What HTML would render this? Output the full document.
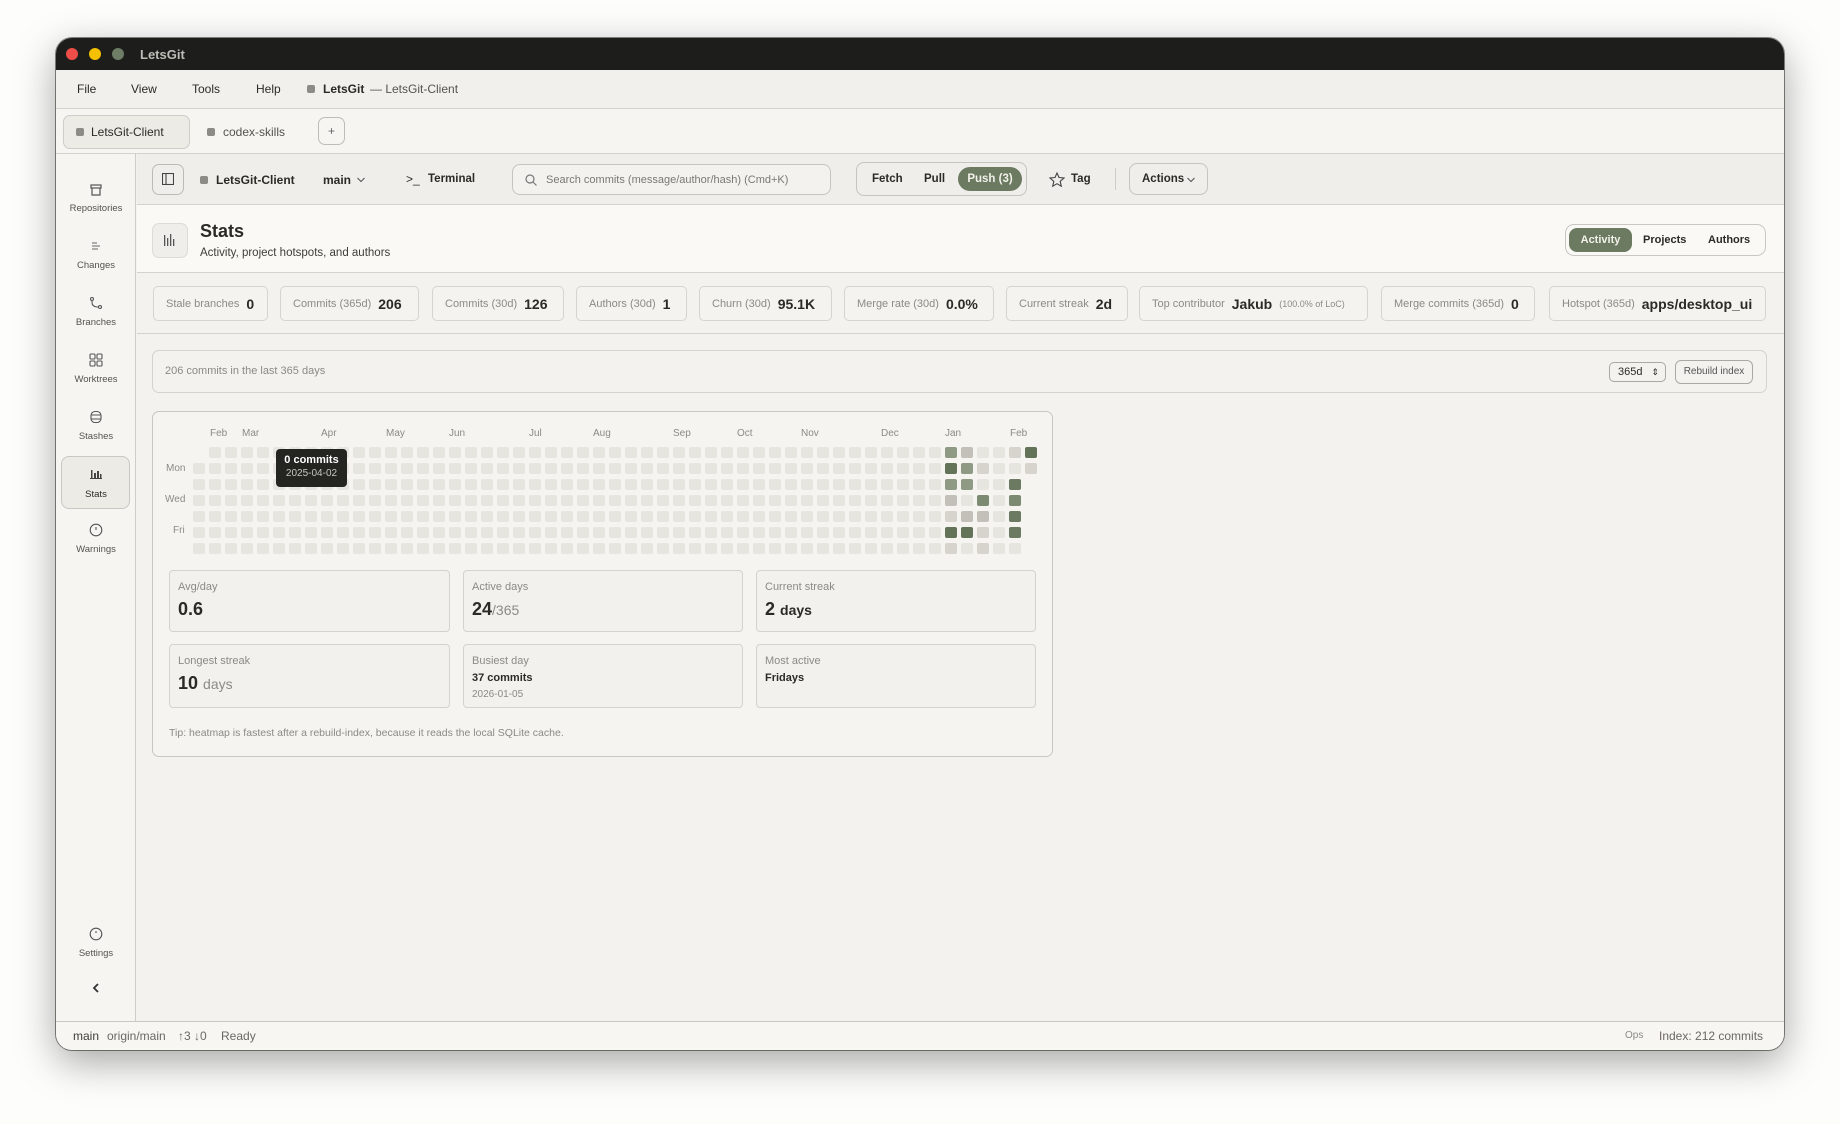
<!DOCTYPE html>
<html><head><meta charset="utf-8"><style>
*{box-sizing:border-box;margin:0;padding:0}
body{width:1840px;height:1124px;background:#fdfdfc;font-family:"Liberation Sans",sans-serif;color:#2a2a26;position:relative;overflow:hidden}
.a{position:absolute}
.win{position:absolute;left:56px;top:38px;width:1728px;height:1012px;border-radius:16px;overflow:hidden;background:#f3f2ee;box-shadow:0 12px 40px rgba(0,0,0,.35),0 0 0 1px #8a8a86}
.t{position:absolute;white-space:nowrap}
.card{position:absolute;top:286px;height:35px;border:1px solid #d6d4ce;border-radius:5px;background:#f4f3ef;font-size:11px;color:#8c8a84;display:flex;align-items:center;padding:0 12px;gap:7px;white-space:nowrap;overflow:hidden}
.card b{font-size:14px;color:#2a2a26}
.sb{position:absolute;left:0;width:80px;text-align:center;font-size:9.5px;color:#55534e}
.bc{position:absolute;border:1px solid #d4d2cc;border-radius:4px;background:#f2f1ed}
.bc .l{position:absolute;left:8px;top:10px;font-size:11px;color:#8c8a84}
.bc .v{position:absolute;left:8px;top:28px;font-size:18px;font-weight:bold;color:#2a2a26}
.v span{font-size:14px;font-weight:normal;color:#8c8a84}
.ml{position:absolute;top:428px;font-size:10px;color:#8c8a84}
</style></head><body>
<div class="win">
 <div class="a" style="left:0;top:0;width:1728px;height:32px;background:#1d1d1b"></div>
 <div class="a" style="left:10px;top:10px;width:12px;height:12px;border-radius:50%;background:#ee4d48"></div>
 <div class="a" style="left:33px;top:10px;width:12px;height:12px;border-radius:50%;background:#f5c000"></div>
 <div class="a" style="left:56px;top:10px;width:12px;height:12px;border-radius:50%;background:#6e7d65"></div>
 <div class="t" style="left:84px;top:9px;font-size:13px;color:#bdbdb8;font-weight:bold">LetsGit</div>
 <div class="a" style="left:0;top:32px;width:1728px;height:39px;background:#f1f0ec;border-bottom:1px solid #d4d2cc"></div>
 <div class="t" style="left:21px;top:44px;font-size:12px">File</div>
 <div class="t" style="left:75px;top:44px;font-size:12px">View</div>
 <div class="t" style="left:136px;top:44px;font-size:12px">Tools</div>
 <div class="t" style="left:200px;top:44px;font-size:12px">Help</div>
 <div class="a" style="left:251px;top:47px;width:8px;height:8px;border-radius:2px;background:#8d8b85"></div>
 <div class="t" style="left:267px;top:44px;font-size:12px;font-weight:bold">LetsGit</div>
 <div class="t" style="left:314px;top:44px;font-size:12px;color:#55534e">— LetsGit-Client</div>
 <div class="a" style="left:0;top:71px;width:1728px;height:45px;background:#f6f5f2;border-bottom:1px solid #d4d2cc"></div>
 <div class="a" style="left:7px;top:77px;width:127px;height:34px;border:1px solid #cfcdc7;border-radius:7px;background:#ecebe6"></div>
 <div class="a" style="left:20px;top:90px;width:8px;height:8px;border-radius:2px;background:#8d8b85"></div>
 <div class="t" style="left:35px;top:87px;font-size:12px">LetsGit-Client</div>
 <div class="a" style="left:151px;top:90px;width:8px;height:8px;border-radius:2px;background:#8d8b85"></div>
 <div class="t" style="left:167px;top:87px;font-size:12px;color:#55534e">codex-skills</div>
 <div class="a" style="left:262px;top:79px;width:27px;height:28px;border:1px solid #bebcb6;border-radius:7px;text-align:center;line-height:26px;font-size:12px;color:#666">+</div>
 <div class="a" style="left:0;top:116px;width:80px;height:867px;background:#f6f5f2;border-right:1px solid #cfcdc7"></div>
 <svg class="a" style="left:33px;top:145px" width="14" height="14" viewBox="0 0 14 14" fill="none" stroke="#555" stroke-width="1.2"><rect x="2" y="2" width="10" height="3"/><path d="M3 5v7h8V5"/></svg>
 <div class="sb" style="top:165px">Repositories</div>
 <svg class="a" style="left:34px;top:202px" width="12" height="12" fill="none" stroke="#666" stroke-width="1.1"><path d="M2 3h5M2 6h8M2 9h6"/></svg>
 <div class="sb" style="top:222px">Changes</div>
 <svg class="a" style="left:33px;top:258px" width="14" height="14" fill="none" stroke="#555" stroke-width="1.1"><circle cx="3" cy="3" r="1.5"/><circle cx="11" cy="11" r="1.5"/><path d="M3 4.5v2q0 4 5 4.5h1.5"/></svg>
 <div class="sb" style="top:279px">Branches</div>
 <svg class="a" style="left:33px;top:315px" width="14" height="14" fill="none" stroke="#555" stroke-width="1.1"><rect x="1" y="1" width="5" height="5" rx="1"/><rect x="8" y="1" width="5" height="5" rx="1"/><rect x="1" y="8" width="5" height="5" rx="1"/><rect x="8" y="8" width="5" height="5" rx="1"/></svg>
 <div class="sb" style="top:336px">Worktrees</div>
 <svg class="a" style="left:33px;top:372px" width="14" height="14" fill="none" stroke="#555" stroke-width="1.1"><rect x="2" y="1.5" width="10" height="11" rx="4"/><path d="M2 5h10M2 9h10"/></svg>
 <div class="sb" style="top:393px">Stashes</div>
 <div class="a" style="left:5px;top:418px;width:69px;height:53px;border:1px solid #c9c7c1;border-radius:8px;background:#ecebe6"></div>
 <svg class="a" style="left:33px;top:430px" width="14" height="12" fill="#444"><rect x="2" y="2" width="1.5" height="8"/><rect x="5" y="5" width="2" height="5"/><rect x="8" y="3" width="2" height="7"/><rect x="11" y="6" width="1.5" height="4"/><rect x="1" y="10" width="12" height="1"/></svg>
 <div class="sb" style="top:451px;color:#2a2a26">Stats</div>
 <svg class="a" style="left:33px;top:485px" width="14" height="14" fill="none" stroke="#555" stroke-width="1.1"><circle cx="7" cy="7" r="5.8"/><path d="M7 4v3"/></svg>
 <div class="sb" style="top:506px">Warnings</div>
 <svg class="a" style="left:33px;top:889px" width="14" height="14" fill="none" stroke="#555" stroke-width="1.1"><circle cx="7" cy="7" r="5.8"/><path d="M7 4v2"/></svg>
 <div class="sb" style="top:910px">Settings</div>
 <svg class="a" style="left:35px;top:944px" width="10" height="12" fill="none" stroke="#333" stroke-width="1.8"><path d="M7 2L3 6l4 4"/></svg>
 <div class="a" style="left:81px;top:116px;width:1647px;height:51px;background:#efeeea;border-bottom:1px solid #d4d2cc"></div>
 <div class="a" style="left:96px;top:126px;width:32px;height:31px;border:1px solid #bdbbb5;border-radius:7px"></div>
 <svg class="a" style="left:106px;top:135px" width="12" height="12" fill="none" stroke="#444" stroke-width="1.1"><rect x="0.5" y="0.5" width="11" height="11"/><path d="M4 1v10"/></svg>
 <div class="a" style="left:144px;top:138px;width:8px;height:8px;border-radius:2px;background:#8d8b85"></div>
 <div class="t" style="left:160px;top:135px;font-size:12px;font-weight:bold">LetsGit-Client</div>
 <div class="t" style="left:267px;top:135px;font-size:12px;font-weight:bold">main</div>
 <svg class="a" style="left:300px;top:138px" width="10" height="8" fill="none" stroke="#555" stroke-width="1.1"><path d="M1.5 2l3.5 3.5L8.5 2"/></svg>
 <div class="t" style="left:350px;top:134px;font-size:12px">&gt;_</div>
 <div class="t" style="left:372px;top:135px;font-size:11.5px;font-weight:bold">Terminal</div>
 <div class="a" style="left:456px;top:126px;width:319px;height:31px;border:1px solid #c6c4be;border-radius:8px;background:#f3f2ee"></div>
 <svg class="a" style="left:469px;top:136px" width="12" height="12" fill="none" stroke="#777" stroke-width="1.2"><circle cx="5" cy="5" r="4"/><path d="M8 8l3.5 3.5"/></svg>
 <div class="t" style="left:490px;top:136px;font-size:11px;color:#7a7873">Search commits (message/author/hash) (Cmd+K)</div>
 <div class="a" style="left:800px;top:124px;width:171px;height:34px;border:1px solid #c6c4be;border-radius:8px"></div>
 <div class="t" style="left:816px;top:135px;font-size:11.5px;font-weight:bold">Fetch</div>
 <div class="t" style="left:868px;top:135px;font-size:11.5px;font-weight:bold">Pull</div>
 <div class="a" style="left:902px;top:129px;width:64px;height:24px;border-radius:12px;background:#6b7a60;color:#f2f1ea;font-size:11.5px;font-weight:bold;text-align:center;line-height:24px">Push (3)</div>
 <svg class="a" style="left:993px;top:134px" width="16" height="15" fill="none" stroke="#444" stroke-width="1.1"><path d="M8 1l2 4.5 5 .5-3.8 3.3 1.1 4.9L8 11.7 3.7 14.2l1.1-4.9L1 6l5-.5z"/></svg>
 <div class="t" style="left:1015px;top:135px;font-size:11.5px;font-weight:bold">Tag</div>
 <div class="a" style="left:1059px;top:130px;width:1px;height:22px;background:#cfcdc7"></div>
 <div class="a" style="left:1073px;top:125px;width:79px;height:32px;border:1px solid #c6c4be;border-radius:8px;font-size:11.5px;font-weight:bold;line-height:30px;padding-left:12px">Actions</div>
 <svg class="a" style="left:1130px;top:138px" width="10" height="8" fill="none" stroke="#555" stroke-width="1.1"><path d="M1.5 2l3.5 3.5L8.5 2"/></svg>
 <div class="a" style="left:81px;top:167px;width:1647px;height:68px;background:#faf9f6;border-bottom:1px solid #d4d2cc"></div>
 <div class="a" style="left:96px;top:185px;width:36px;height:35px;border:1px solid #dddbd5;border-radius:7px;background:#efeeea"></div>
 <svg class="a" style="left:106px;top:194px" width="16" height="16" fill="#555"><rect x="2" y="3" width="1.3" height="11"/><rect x="5" y="6" width="1.3" height="8"/><rect x="8" y="2" width="1.3" height="12"/><rect x="11" y="7" width="1.3" height="7"/></svg>
 <div class="t" style="left:144px;top:183px;font-size:18px;font-weight:bold">Stats</div>
 <div class="t" style="left:144px;top:209px;font-size:11.5px;color:#3f3d38">Activity, project hotspots, and authors</div>
 <div class="a" style="left:1509px;top:186px;width:201px;height:32px;border:1px solid #c9c7c1;border-radius:9px;background:#faf9f6"></div>
 <div class="a" style="left:1513px;top:190px;width:63px;height:24px;border-radius:8px;background:#6b7a60;color:#f2f1ea;font-size:11px;font-weight:bold;text-align:center;line-height:24px">Activity</div>
 <div class="t" style="left:1587px;top:196px;font-size:11px;font-weight:bold">Projects</div>
 <div class="t" style="left:1652px;top:196px;font-size:11px;font-weight:bold">Authors</div>
 <div class="card" style="left:97px;width:115px;top:248px">Stale branches <b>0</b></div>
 <div class="card" style="left:224px;width:139px;top:248px">Commits (365d) <b>206</b></div>
 <div class="card" style="left:376px;width:132px;top:248px">Commits (30d) <b>126</b></div>
 <div class="card" style="left:520px;width:111px;top:248px">Authors (30d) <b>1</b></div>
 <div class="card" style="left:643px;width:133px;top:248px">Churn (30d) <b>95.1K</b></div>
 <div class="card" style="left:788px;width:150px;top:248px">Merge rate (30d) <b>0.0%</b></div>
 <div class="card" style="left:950px;width:122px;top:248px">Current streak <b>2d</b></div>
 <div class="card" style="left:1083px;width:229px;top:248px">Top contributor <b>Jakub</b> <span style="font-size:9px">(100.0% of LoC)</span></div>
 <div class="card" style="left:1325px;width:154px;top:248px">Merge commits (365d) <b>0</b></div>
 <div class="card" style="left:1493px;width:217px;top:248px">Hotspot (365d) <b>apps/desktop_ui</b></div>
 <div class="a" style="left:81px;top:295px;width:1647px;height:1px;background:#d4d2cc"></div>
 <div class="a" style="left:96px;top:312px;width:1615px;height:43px;border:1px solid #d4d2cc;border-radius:7px"></div>
 <div class="t" style="left:109px;top:327px;font-size:11px;color:#8c8a84">206 commits in the last 365 days</div>
 <div class="a" style="left:1553px;top:324px;width:57px;height:20px;border:1px solid #aaa8a2;border-radius:5px;font-size:11px;line-height:18px;padding-left:8px">365d <span style="position:absolute;right:6px;top:0;font-size:9px">⇕</span></div>
 <div class="a" style="left:1619px;top:322px;width:78px;height:24px;border:1px solid #aaa8a2;border-radius:6px;font-size:10px;line-height:22px;text-align:center;color:#555">Rebuild index</div>
 <div class="a" style="left:96px;top:373px;width:901px;height:346px;border:1px solid #c9c7c1;border-radius:7px;background:#f5f4f0"></div>
</div>
<div class="ml" style="left:210px">Feb</div><div class="ml" style="left:242px">Mar</div><div class="ml" style="left:321px">Apr</div><div class="ml" style="left:386px">May</div><div class="ml" style="left:449px">Jun</div><div class="ml" style="left:529px">Jul</div><div class="ml" style="left:593px">Aug</div><div class="ml" style="left:673px">Sep</div><div class="ml" style="left:737px">Oct</div><div class="ml" style="left:801px">Nov</div><div class="ml" style="left:881px">Dec</div><div class="ml" style="left:945px">Jan</div><div class="ml" style="left:1010px">Feb</div>
<div class="t" style="left:166px;top:463px;font-size:10px;color:#8c8a84">Mon</div>
<div class="t" style="left:165px;top:494px;font-size:10px;color:#8c8a84">Wed</div>
<div class="t" style="left:173px;top:525px;font-size:10px;color:#8c8a84">Fri</div>
<svg class="a" style="left:193px;top:447px" width="850" height="115">
 <defs><pattern id="p" width="16" height="16" patternUnits="userSpaceOnUse"><rect x="0" y="0" width="12" height="11" rx="2" fill="#e7e5e0"/></pattern></defs>
 <rect x="0" y="0" width="752" height="112" fill="url(#p)"/>
 <rect x="0" y="0" width="14" height="13" fill="#f5f4f0"/>
 <g fill="#e7e5e0"><rect x="768" y="48" width="12" height="11" rx="2"/><rect x="768" y="96" width="12" height="11" rx="2"/><rect x="784" y="0" width="12" height="11" rx="2"/><rect x="784" y="32" width="12" height="11" rx="2"/><rect x="800" y="0" width="12" height="11" rx="2"/><rect x="800" y="16" width="12" height="11" rx="2"/><rect x="800" y="32" width="12" height="11" rx="2"/><rect x="800" y="48" width="12" height="11" rx="2"/><rect x="800" y="64" width="12" height="11" rx="2"/><rect x="800" y="80" width="12" height="11" rx="2"/><rect x="800" y="96" width="12" height="11" rx="2"/><rect x="816" y="16" width="12" height="11" rx="2"/><rect x="816" y="96" width="12" height="11" rx="2"/></g>
 <g>
 <rect x="752" y="0" width="12" height="11" rx="2" fill="#8f9a85"/><rect x="752" y="16" width="12" height="11" rx="2" fill="#637358"/><rect x="752" y="32" width="12" height="11" rx="2" fill="#8f9a85"/><rect x="752" y="48" width="12" height="11" rx="2" fill="#c2c0b8"/><rect x="752" y="64" width="12" height="11" rx="2" fill="#d6d4cd"/><rect x="752" y="80" width="12" height="11" rx="2" fill="#637358"/><rect x="752" y="96" width="12" height="11" rx="2" fill="#d6d4cd"/>
 <rect x="768" y="0" width="12" height="11" rx="2" fill="#c2c0b8"/><rect x="768" y="16" width="12" height="11" rx="2" fill="#8f9a85"/><rect x="768" y="32" width="12" height="11" rx="2" fill="#8f9a85"/><rect x="768" y="64" width="12" height="11" rx="2" fill="#c2c0b8"/><rect x="768" y="80" width="12" height="11" rx="2" fill="#637358"/>
 <rect x="784" y="16" width="12" height="11" rx="2" fill="#d6d4cd"/><rect x="784" y="48" width="12" height="11" rx="2" fill="#7d8a72"/><rect x="784" y="64" width="12" height="11" rx="2" fill="#c2c0b8"/><rect x="784" y="80" width="12" height="11" rx="2" fill="#d6d4cd"/><rect x="784" y="96" width="12" height="11" rx="2" fill="#d6d4cd"/>
 <rect x="816" y="0" width="12" height="11" rx="2" fill="#d6d4cd"/><rect x="816" y="32" width="12" height="11" rx="2" fill="#6b7a60"/><rect x="816" y="48" width="12" height="11" rx="2" fill="#7d8a72"/><rect x="816" y="64" width="12" height="11" rx="2" fill="#6b7a60"/><rect x="816" y="80" width="12" height="11" rx="2" fill="#6b7a60"/>
 <rect x="832" y="0" width="12" height="11" rx="2" fill="#637358"/><rect x="832" y="16" width="12" height="11" rx="2" fill="#d6d4cd"/>
 </g>
</svg>
<div class="a" style="left:276px;top:449px;width:71px;height:38px;border-radius:4px;background:#242420;text-align:center">
 <div style="font-size:11px;font-weight:bold;color:#fff;margin-top:5px">0 commits</div>
 <div style="font-size:10px;color:#c8c6c0;margin-top:2px">2025-04-02</div>
</div>
<div class="bc" style="left:169px;top:570px;width:281px;height:62px"><div class="l">Avg/day</div><div class="v">0.6</div></div>
<div class="bc" style="left:463px;top:570px;width:280px;height:62px"><div class="l">Active days</div><div class="v">24<span>/365</span></div></div>
<div class="bc" style="left:756px;top:570px;width:280px;height:62px"><div class="l">Current streak</div><div class="v">2 <span style="color:#2a2a26;font-weight:bold">days</span></div></div>
<div class="bc" style="left:169px;top:644px;width:281px;height:64px"><div class="l">Longest streak</div><div class="v">10 <span>days</span></div></div>
<div class="bc" style="left:463px;top:644px;width:280px;height:64px"><div class="l">Busiest day</div><div style="position:absolute;left:8px;top:27px;font-size:11px;font-weight:bold">37 commits</div><div style="position:absolute;left:8px;top:44px;font-size:10px;color:#8c8a84">2026-01-05</div></div>
<div class="bc" style="left:756px;top:644px;width:280px;height:64px"><div class="l">Most active</div><div style="position:absolute;left:8px;top:27px;font-size:11px;font-weight:bold">Fridays</div></div>
<div class="t" style="left:169px;top:727px;font-size:10.5px;color:#8c8a84">Tip: heatmap is fastest after a rebuild-index, because it reads the local SQLite cache.</div>
<div class="a" style="left:56px;top:1021px;width:1728px;height:1px;background:#c9c7c1"></div>
<div class="a" style="left:56px;top:1022px;width:1728px;height:28px;background:#f7f6f3;border-radius:0 0 16px 16px"></div>
<div class="t" style="left:73px;top:1029px;font-size:12px;color:#3f3d38">main</div>
<div class="t" style="left:107px;top:1029px;font-size:12px;color:#6a6863">origin/main</div>
<div class="t" style="left:178px;top:1029px;font-size:12px;color:#6a6863">↑3 ↓0</div>
<div class="t" style="left:221px;top:1029px;font-size:12px;color:#6a6863">Ready</div>
<div class="t" style="left:1625px;top:1030px;font-size:10px;color:#8c8a84">Ops</div>
<div class="t" style="left:1659px;top:1029px;font-size:12px;color:#6a6863">Index: 212 commits</div>
</body></html>
